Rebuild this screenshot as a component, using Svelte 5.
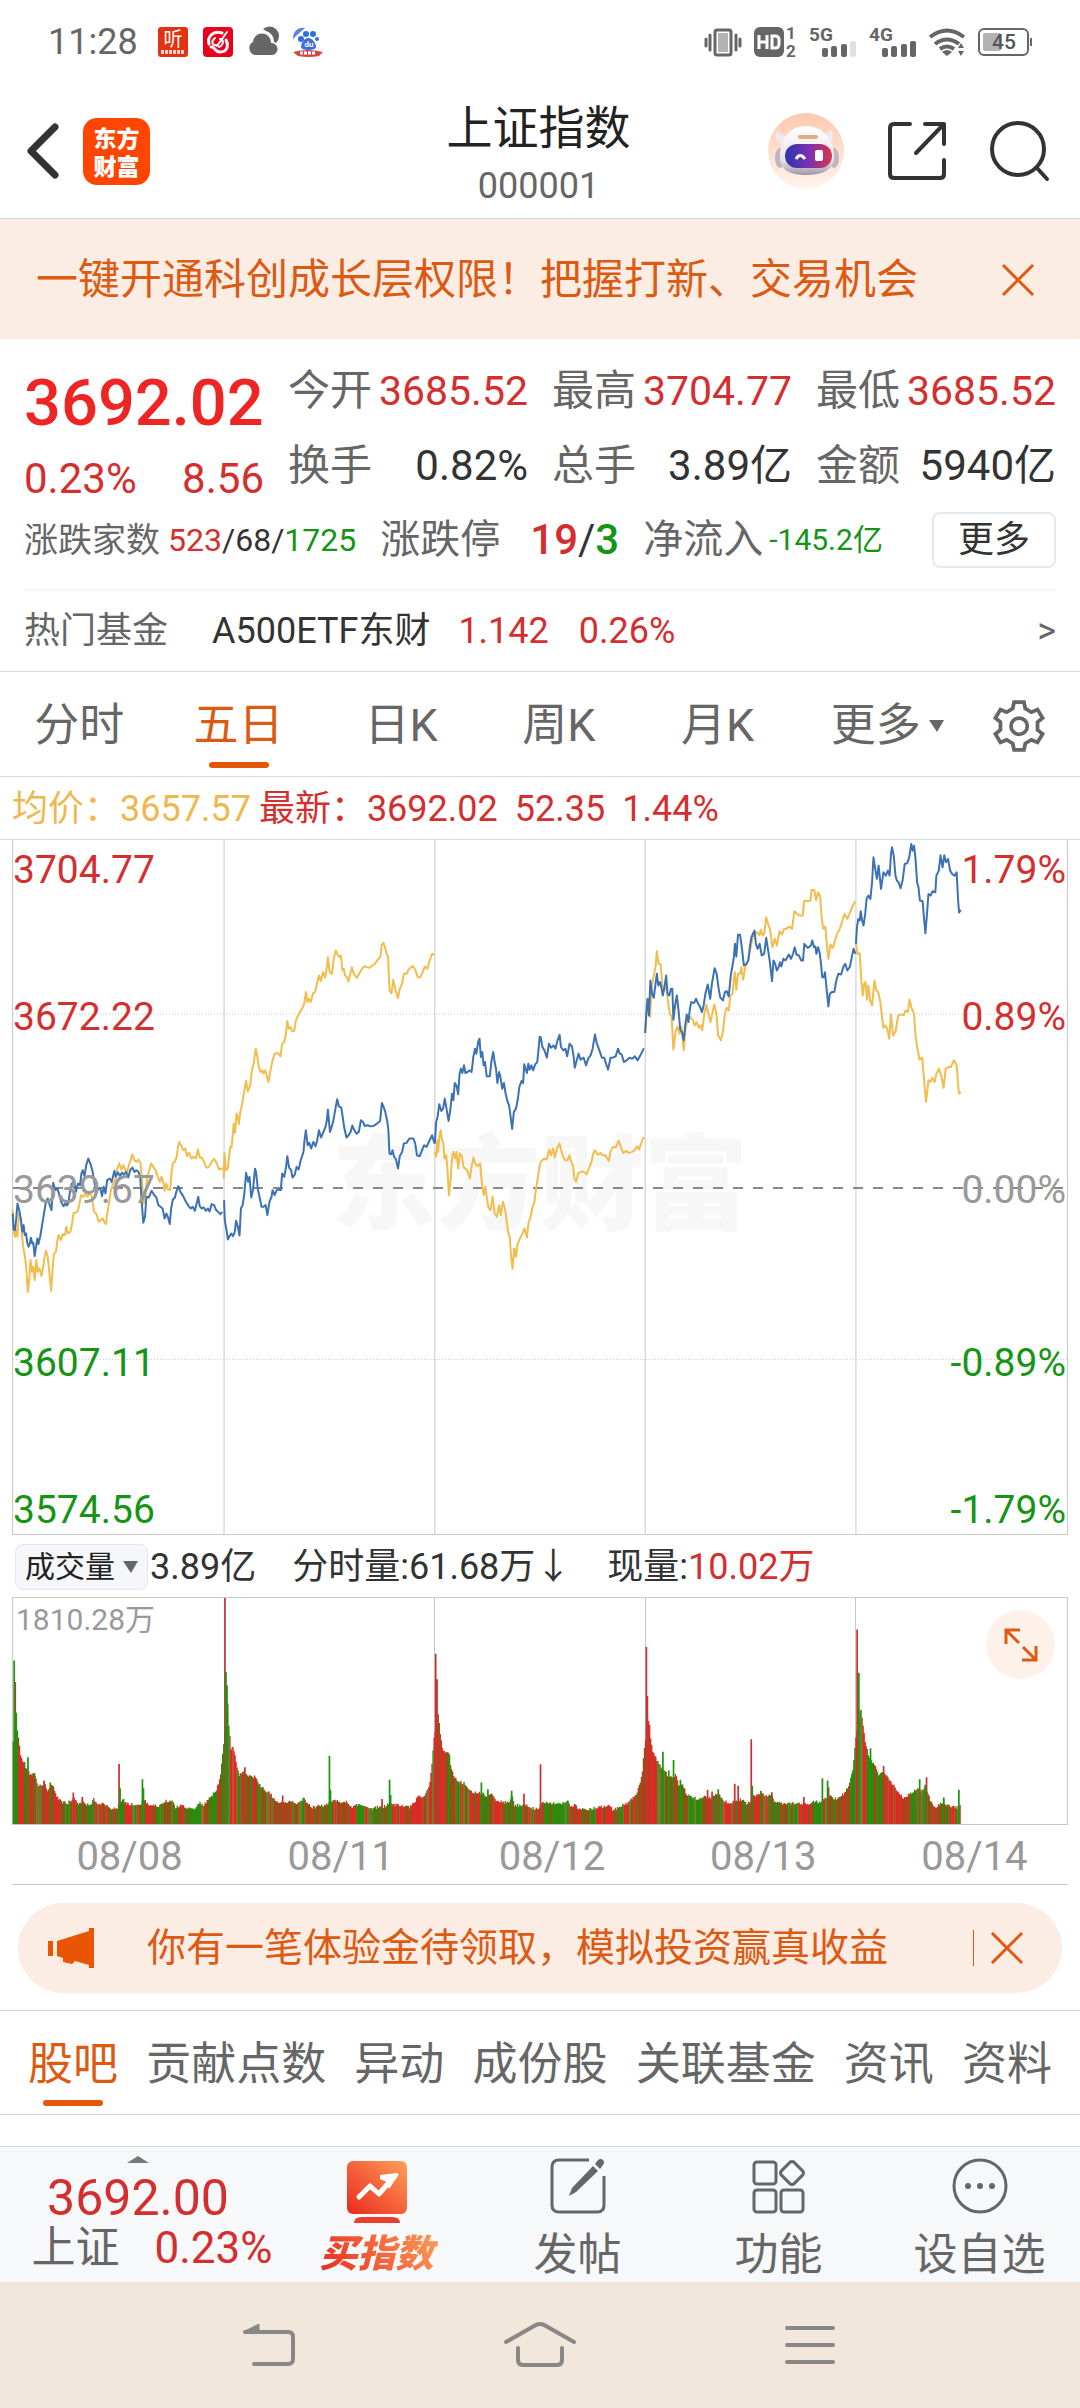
<script>
  const stats = [
    { label: '今开', value: '3685.52', tone: 'up' },
    { label: '最高', value: '3704.77', tone: 'up' },
    { label: '最低', value: '3685.52', tone: 'up' },
    { label: '换手', value: '0.82%', tone: '' },
    { label: '总手', value: '3.89亿', tone: '' },
    { label: '金额', value: '5940亿', tone: '' },
  ];
  const periods = ['分时', '五日', '日K', '周K', '月K'];
  const sections = ['股吧', '贡献点数', '异动', '成份股', '关联基金', '资讯', '资料'];
  const days = ['08/08', '08/11', '08/12', '08/13', '08/14'];
  const dividers = [649, 1262, 1874, 2487];

  let period = $state('五日');
  let section = $state('股吧');

  // Price traces, one polyline per trading day; dx/dy place each group on the plot.
  const traces = [
    { kind: 'avg', dx: 0, dy: 722, points: '34,388 37,455 41,470 44,450 48,470 52,400 55,410 58,420 62,475 66,510 70,530 74,570 78,636 82,600 86,540 90,575 94,560 98,600 103,540 107,575 112,565 118,588 123,560 127,530 131,512 136,530 140,570 146,632 150,570 154,520 160,515 164,480 168,465 174,480 180,462 186,465 190,440 195,460 202,455 207,430 211,398 218,398 224,392 228,372 233,345 240,350 246,340 252,350 257,338 263,345 267,370 271,395 278,402 284,425 290,420 296,415 300,425 305,432 310,395 315,365 320,330 326,310 332,300 337,270 344,250 350,268 356,255 362,270 367,275 372,255 377,240 382,223 388,240 394,245 400,238 406,250 410,300 415,370 420,345 425,290 430,275 437,250 443,260 450,270 456,290 462,305 467,290 472,305 476,332 481,310 486,328 492,330 496,280 500,248 506,245 511,230 515,200 519,185 524,195 530,210 536,205 541,228 547,218 554,235 560,230 567,235 573,207 578,232 584,232 591,245 597,262 603,262 608,255 614,242 620,236 627,248 634,268 640,265 648,266' },
    { kind: 'avg', dx: 0, dy: 722, points: '648,295 650,218 654,270 660,265 663,235 667,200 671,200 674,165 677,130 681,158 685,100 688,105 692,132 697,90 701,75 704,55 708,30 713,2 718,33 725,15 730,-30 735,-50 741,-95 746,-70 750,-40 755,-25 760,-30 764,-20 769,-30 774,-10 778,5 784,-30 790,-60 796,-80 806,-82 813,-72 818,-110 824,-115 829,-140 833,-178 837,-155 842,-160 848,-147 853,-148 858,-180 863,-192 870,-205 876,-215 882,-230 887,-265 891,-235 896,-245 901,-235 908,-262 914,-265 919,-290 925,-315 930,-298 937,-325 943,-308 948,-340 951,-370 956,-325 963,-320 968,-365 974,-390 979,-378 985,-370 989,-375 993,-330 997,-335 1001,-315 1006,-310 1011,-297 1016,-320 1021,-340 1026,-320 1035,-308 1042,-320 1050,-335 1058,-343 1064,-340 1072,-338 1080,-345 1088,-350 1094,-360 1104,-372 1108,-408 1113,-413 1117,-400 1122,-380 1126,-370 1129,-300 1131,-268 1136,-262 1141,-302 1148,-270 1155,-247 1160,-275 1167,-290 1172,-320 1180,-320 1187,-335 1198,-343 1205,-332 1212,-310 1220,-310 1227,-325 1233,-342 1240,-335 1247,-360 1254,-380 1261,-378' },
    { kind: 'avg', dx: 0, dy: 722, points: '1262,215 1266,230 1269,180 1272,215 1275,170 1279,150 1283,180 1287,190 1290,235 1295,225 1299,270 1303,345 1308,300 1312,235 1316,215 1321,235 1325,215 1330,265 1335,220 1341,230 1346,262 1352,265 1358,275 1364,295 1369,260 1374,232 1380,250 1386,258 1394,250 1398,300 1404,345 1409,320 1413,350 1418,382 1424,390 1430,350 1436,400 1443,410 1449,375 1454,405 1460,365 1466,385 1472,430 1476,460 1480,470 1484,530 1488,566 1493,505 1498,530 1503,490 1510,475 1517,460 1523,445 1530,472 1535,425 1541,410 1546,380 1551,370 1556,330 1562,290 1566,262 1570,245 1580,235 1588,238 1595,208 1600,225 1606,205 1611,232 1617,205 1625,190 1632,220 1640,240 1648,240 1653,225 1659,245 1664,255 1668,295 1673,305 1679,280 1686,275 1695,275 1704,282 1710,265 1718,245 1723,220 1728,210 1736,223 1744,218 1750,225 1758,225 1764,235 1768,242 1773,215 1780,200 1788,202 1797,182 1803,200 1810,218 1818,212 1826,218 1836,215 1844,210 1850,198 1856,208 1862,190 1870,170' },
    { kind: 'avg', dx: 1568, dy: -58, points: '306,638 309,590 313,540 316,580 320,590 325,500 330,470 336,440 340,392 345,430 351,432 356,495 362,510 368,500 373,550 378,580 383,590 388,688 394,635 400,618 406,640 412,620 418,690 424,620 430,595 438,590 444,598 450,615 456,605 462,622 467,615 472,630 478,580 484,553 490,580 496,605 502,575 507,552 513,580 518,645 526,660 532,635 538,580 543,562 549,570 554,525 560,520 564,475 567,455 571,508 576,460 582,460 586,440 591,478 597,440 603,430 609,400 614,375 619,350 626,340 632,335 639,345 642,328 648,345 652,340 658,290 664,312 670,330 676,380 683,355 689,375 697,332 704,342 710,325 717,325 725,318 733,325 740,272 746,278 753,285 764,285 769,240 776,242 787,240 790,208 798,208 803,238 809,215 815,228 819,290 824,325 830,318 835,380 839,415 845,372 852,382 858,360 864,340 872,325 880,300 886,280 894,295 902,275 910,255 918,242' },
    { kind: 'avg', dx: 1568, dy: -58, points: '919,370 924,400 930,398 934,470 939,525 943,490 947,485 951,538 955,495 960,540 966,555 973,480 978,510 984,515 990,545 994,580 999,622 1005,615 1010,625 1016,655 1021,582 1027,645 1034,635 1042,585 1050,582 1058,585 1063,570 1070,575 1075,537 1080,560 1088,580 1092,640 1097,680 1104,718 1112,712 1118,790 1123,845 1130,780 1136,785 1141,772 1148,785 1153,760 1161,745 1168,770 1174,803 1180,745 1188,740 1195,740 1204,720 1212,735 1216,790 1219,820 1224,815' },
    { kind: 'price', dx: 0, dy: 722, points: '34,400 37,448 41,450 44,420 48,370 52,385 55,400 59,425 62,455 66,435 69,465 73,460 76,485 80,500 84,490 87,473 91,490 94,488 98,528 102,500 106,475 109,492 114,470 118,445 122,420 126,395 130,370 136,355 142,375 147,390 152,308 158,330 164,325 170,345 176,368 182,378 187,370 192,376 196,368 200,340 206,310 213,305 218,335 224,310 230,315 234,280 238,270 243,288 248,255 254,235 260,250 266,272 271,300 277,340 283,325 289,325 294,348 299,320 304,340 309,300 316,295 322,305 330,272 334,290 340,276 346,287 352,278 358,282 364,275 370,292 376,270 382,262 388,275 394,270 400,275 405,290 409,360 414,428 419,410 423,350 430,352 438,332 446,345 452,352 458,375 464,380 470,385 476,415 481,400 486,412 491,432 495,385 500,358 506,352 510,335 516,318 522,335 530,348 538,365 546,378 552,385 558,380 564,392 568,375 574,350 578,378 584,385 590,382 596,392 602,385 607,394 613,372 620,375 626,390 632,395 638,402 644,395' },
    { kind: 'price', dx: 0, dy: 722, points: '649,360 651,420 656,450 660,478 665,468 670,460 675,468 680,455 684,422 689,440 694,466 698,385 703,375 708,340 713,278 719,305 723,290 728,352 733,330 739,266 742,275 747,325 752,350 758,380 764,380 770,375 775,405 781,365 787,350 790,330 796,345 802,330 808,328 814,330 818,280 824,290 829,262 833,228 838,262 844,270 848,292 854,285 860,260 866,268 872,240 880,215 883,180 887,150 892,195 897,188 902,205 909,185 915,198 920,180 925,150 931,172 938,155 944,140 948,120 951,88 957,155 962,140 967,120 973,85 978,57 983,78 990,82 994,110 999,145 1005,172 1011,165 1017,155 1022,136 1028,150 1034,160 1041,155 1047,120 1053,125 1058,137 1066,135 1074,138 1084,137 1094,130 1103,122 1108,68 1113,80 1118,95 1124,125 1127,150 1130,220 1135,222 1139,210 1143,228 1149,238 1155,265 1160,228 1167,215 1172,190 1180,188 1188,175 1200,175 1205,190 1210,225 1218,228 1225,210 1231,195 1238,200 1247,180 1254,165 1261,190' },
    { kind: 'price', dx: 0, dy: 722, points: '1262,190 1266,125 1270,110 1275,72 1281,92 1286,85 1291,55 1296,85 1302,122 1307,90 1312,40 1316,60 1320,8 1325,15 1330,42 1334,-20 1338,-35 1342,-22 1347,-45 1351,-22 1357,-25 1363,-30 1369,-25 1374,-70 1379,-95 1383,-80 1388,-115 1392,-125 1396,-70 1400,-85 1404,-45 1408,-55 1413,-12 1422,-12 1427,-60 1432,-85 1436,-55 1440,-35 1444,8 1449,-25 1453,-10 1458,25 1463,8 1468,40 1474,65 1478,75 1482,105 1487,146 1492,95 1498,85 1503,60 1508,20 1514,2 1519,8 1522,-48 1526,-35 1530,-22 1534,-50 1538,-32 1543,-45 1548,-30 1554,-48 1560,-55 1564,-95 1567,-130 1570,-130 1575,-100 1581,-90 1588,-68 1594,-110 1600,-98 1607,-105 1613,-95 1619,-120 1625,-137 1629,-100 1636,-90 1642,-95 1647,-72 1654,-110 1661,-102 1666,-70 1669,-38 1675,-60 1680,-80 1686,-62 1695,-68 1702,-45 1708,-65 1715,-75 1721,-95 1728,-138 1733,-112 1740,-92 1748,-68 1755,-68 1760,-50 1766,-32 1773,-68 1780,-68 1788,-72 1795,-95 1800,-80 1806,-77 1812,-55 1820,-60 1828,-68 1836,-65 1844,-72 1852,-60 1860,-75 1870,-96' },
    { kind: 'price', dx: 1568, dy: -58, points: '306,638 309,580 313,535 317,585 321,480 326,520 331,532 336,490 340,460 344,495 349,485 353,500 357,525 362,500 367,465 371,520 376,525 381,505 385,505 388,598 393,555 398,525 403,570 408,628 413,635 418,660 423,610 427,582 432,605 436,565 440,545 448,548 454,535 460,550 466,560 471,575 476,555 481,520 488,492 495,535 500,490 508,443 514,460 519,500 524,530 532,540 538,515 543,512 549,528 555,465 560,435 564,410 567,370 571,408 576,343 582,343 587,380 593,435 600,430 606,420 611,375 615,350 624,330 628,370 633,385 639,370 645,405 652,400 658,352 663,385 668,420 675,482 679,420 684,430 689,450 694,440 698,425 702,438 708,415 714,420 724,402 730,415 736,400 741,380 746,402 753,405 760,420 765,420 769,370 775,378 780,382 788,375 792,360 797,380 801,378 804,400 809,380 814,400 818,435 821,470 826,470 829,455 834,510 839,558 843,520 849,515 856,515 862,480 868,460 876,462 882,440 888,430 894,450 901,440 906,415 912,385 918,400' },
    { kind: 'price', dx: 1568, dy: -58, points: '919,370 922,320 926,295 930,300 933,272 937,300 941,315 946,280 950,235 955,225 961,235 966,185 970,110 976,150 980,175 985,135 992,205 999,155 1006,165 1012,150 1017,165 1021,100 1024,80 1029,105 1034,165 1038,180 1043,185 1049,203 1055,178 1061,130 1068,128 1074,110 1080,70 1084,90 1088,75 1092,110 1097,185 1101,200 1105,240 1113,242 1116,280 1121,338 1125,290 1130,220 1136,225 1142,212 1150,215 1153,165 1160,150 1165,104 1171,140 1176,104 1181,125 1187,115 1193,150 1199,160 1206,165 1212,155 1216,235 1219,276 1224,268' },
  ];

  // Turnover: the outline of the bars as x,top pairs, then single tall bars.
  const outline = '34,640 46,598 50,630 56,685 65,695 72,715 84,735 97,735 105,770 115,765 125,760 132,780 143,765 152,775 160,800 172,815 190,822 210,805 222,825 235,815 245,826 258,825 268,810 280,822 300,825 318,835 335,840 352,808 362,820 380,825 405,820 416,810 430,828 460,828 475,815 495,812 505,835 520,828 545,836 565,835 577,818 585,828 600,810 612,797 622,785 630,765 638,725 645,655 658,520 660,575 663,605 667,655 675,655 681,690 690,735 700,728 718,740 727,740 738,742 750,765 765,782 778,785 790,805 805,815 830,820 845,815 860,822 880,805 890,825 905,833 925,828 940,828 959,815 980,815 1000,815 1020,830 1050,825 1070,838 1095,832 1118,830 1126,820 1140,825 1165,828 1185,832 1200,820 1212,800 1225,805 1237,785 1245,760 1251,712 1258,625 1271,550 1274,588 1278,628 1283,660 1292,668 1303,675 1308,720 1318,740 1330,755 1345,760 1360,780 1375,788 1390,790 1402,790 1412,800 1425,792 1440,812 1460,818 1475,820 1485,795 1492,825 1510,828 1526,825 1545,835 1563,838 1573,812 1588,820 1620,820 1648,820 1655,835 1668,825 1675,835 1700,838 1725,835 1750,830 1770,828 1778,842 1800,830 1820,820 1835,805 1845,795 1855,765 1863,735 1871,640 1884,565 1886,602 1890,642 1896,670 1906,690 1916,710 1930,725 1940,745 1948,740 1961,735 1971,770 1980,765 1993,795 2008,805 2028,808 2048,800 2063,805 2086,790 2098,810 2118,820 2138,815 2150,810 2170,822 2179,815 2186,790 2193,800 2211,790 2223,800 2242,795 2250,820 2278,822 2303,822 2323,822 2343,825 2363,815 2380,818 2400,805 2410,795 2423,808 2438,800 2453,790 2463,770 2471,745 2477,713 2484,628 2499,530 2505,573 2510,622 2516,650 2523,680 2534,700 2542,705 2553,740 2565,725 2583,750 2593,765 2603,780 2618,800 2628,808 2640,790 2653,785 2666,775 2678,785 2688,775 2698,795 2703,820 2716,832 2728,822 2740,815 2748,828 2768,828 2780,835 2789,820 2791,858';
  const spikes = [
    [38, 390, 'down'], [41, 455, 'up'], [44, 548, 'down'], [78, 682, 'down'], [97, 730, 'down'], [125, 752, 'up'], [143, 758, 'down'], [210, 788, 'up'], [236, 802, 'up'],
    [343, 702, 'up'], [346, 775, 'down'], [411, 748, 'down'], [414, 775, 'down'], [651, 202, 'up'], [654, 425, 'down'], [657, 465, 'down'], [709, 712, 'up'], [727, 738, 'down'], [738, 742, 'up'],
    [819, 797, 'up'], [955, 677, 'down'], [958, 780, 'down'], [1108, 808, 'up'], [1130, 750, 'down'], [1133, 795, 'down'], [1264, 370, 'up'], [1268, 447, 'up'], [1303, 675, 'down'],
    [1397, 758, 'down'], [1416, 778, 'down'], [1485, 783, 'down'], [1521, 792, 'up'], [1569, 703, 'up'], [1648, 812, 'down'], [1877, 350, 'up'], [1880, 497, 'up'], [1925, 665, 'down'],
    [1942, 722, 'down'], [1956, 690, 'down'], [1976, 750, 'down'], [2055, 780, 'up'], [2068, 785, 'up'], [2086, 778, 'down'], [2134, 762, 'up'], [2144, 768, 'up'], [2182, 628, 'up'], [2185, 768, 'down'],
    [2210, 783, 'down'], [2242, 787, 'up'], [2335, 802, 'up'], [2389, 745, 'down'], [2404, 752, 'down'], [2407, 772, 'up'], [2490, 297, 'up'], [2495, 427, 'down'], [2529, 655, 'down'], [2567, 708, 'up'],
    [2672, 748, 'down'], [2688, 765, 'down'], [2692, 742, 'up'], [2742, 803, 'down'], [2786, 780, 'down'],
  ];

  function buildBars() {
    const pts = outline.split(' ').map((p) => p.split(',').map(Number));
    const out = { up: '', down: '', mixed: '' };
    let seed = 17;
    const rand = () => (seed = (seed * 16807) % 2147483647) / 2147483647;
    let i = 0;
    let kind = 'down';
    for (let x = 34; x <= 2790; x += 3) {
      while (i < pts.length - 2 && pts[i + 1][0] < x) i++;
      const [x0, y0] = pts[i];
      const [x1, y1] = pts[i + 1];
      const t = Math.min(1, Math.max(0, (x - x0) / (x1 - x0)));
      const y = Math.round(y0 + (y1 - y0) * t + (rand() - 0.5) * 10);
      if (rand() > 0.45) {
        const r = rand();
        kind = r < 0.34 ? 'up' : r < 0.64 ? 'down' : 'mixed';
      }
      out[kind] += `M${x} ${y}h4V883h-4z`;
    }
    return out;
  }
  const bars = buildBars();
  const tall = (kind) => spikes.filter((s) => s[2] === kind).map(([x, y]) => `M${x - 2} ${y}h5V883h-5z`).join('');
</script>

<div class="app">
  <div class="status">
    <span class="clock">11:28</span>
    <div class="apps">
      <svg width="30" height="30" viewBox="0 0 30 30"><rect width="30" height="30" rx="3" fill="#e23312" /><text class="tiny" x="15" y="19" font-size="19" text-anchor="middle" fill="#fff">听</text><path d="M3 25h24" stroke="#fbd3c8" stroke-width="4" stroke-dasharray="3 1" /></svg>
      <svg width="30" height="30" viewBox="0 0 30 30"><rect width="30" height="30" rx="4" fill="#e9001c" /><g fill="none" stroke="#fff" stroke-linecap="round"><path d="M19 6C10 3 4 10 6 17M8 20c3-2 3 5 9 5 7 0 9-6 6-12" stroke-width="3" /><path d="M24 5 14 19M12 11c-5 4-2 8 2 7M17 12c4 0 4 6-1 8" stroke-width="2" /></g></svg>
      <svg width="30" height="30" viewBox="0 0 30 30"><path d="M7 28a7 7 0 0 1-2-13 9 9 0 0 1 18 1 6 6 0 0 1 1 12Z" fill="#666" /><path d="M15 2a9 9 0 0 1 13 14l-2-1a11 11 0 0 0-8-11Z" fill="#666" /></svg>
      <svg width="30" height="30" viewBox="0 0 30 30"><path d="M0 12C0 4 5 0 12 1L3 9Z" fill="#5b86e0" /><g fill="#2c6fe0"><circle cx="13" cy="7" r="3" /><circle cx="20" cy="7" r="3" /><circle cx="8" cy="12" r="3" /><circle cx="24" cy="12" r="2" /></g><path d="M15 11c5 0 8 6 8 9 0 4-15 4-15 0 0-3 3-9 7-9Z" fill="#3d6be0" /><text class="tiny" x="16" y="20" font-size="8" font-weight="700" text-anchor="middle" fill="#fff">du</text><path d="M0 25q14-4 30 0l-4 4q-10 2-21 0Z" fill="#d8453f" /><path d="M7 26h16" stroke="#fff" stroke-width="3" stroke-dasharray="3 1" /></svg>
    </div>
    <div class="signals">
      <svg width="38" height="30" viewBox="0 0 38 30"><rect x="11" y="3" width="16" height="25" rx="2" fill="#fff" stroke="#666" stroke-width="3" /><rect x="14" y="6" width="10" height="19" fill="#b3b3b3" /><path d="M6 8v15M32 8v15M2 12v7M36 12v7" stroke="#666" stroke-width="3" stroke-linecap="round" /></svg>
      <svg width="43" height="30" viewBox="0 0 43 30"><rect width="30" height="30" rx="6" fill="#666" /><path d="M5 8v14M13 8v14M5 15h8M18 9h3q4 0 4 4v4q0 4-4 4h-3Z" fill="none" stroke="#fff" stroke-width="3" /><g class="tiny" font-size="17" font-weight="700" fill="#666"><text x="32" y="12">1</text><text x="32" y="30">2</text></g></svg>
      {#each ['5G', '4G'] as net}
        <svg width="48" height="30" viewBox="0 0 48 30"><text class="tiny" x="0" y="14" font-size="19" font-weight="700" fill="#666">{net}</text><g fill="#666"><rect x="13" y="21" width="6" height="9" rx="2" /><rect x="22" y="19" width="6" height="11" rx="2" /><rect x="32" y="17" width="6" height="13" rx="2" /><rect x="41" y="14" width="6" height="16" rx="2" opacity={net === '5G' ? 0.2 : 1} /></g></svg>
      {/each}
      <svg width="37" height="30" viewBox="0 0 37 30"><g fill="none" stroke="#666" stroke-width="4"><path d="M1 10Q18-3 35 10" /><path d="M6 17q12-9 24 0" /><path d="M11 22q7-5 14 0" /></g><path d="m13 25 5 4 5-4q-5-4-10 0ZM29 21l3-5 3 5ZM29 24h6l-3 5Z" fill="#666" /></svg>
      <svg width="54" height="28" viewBox="0 0 54 28"><rect x="1" y="1" width="49" height="26" rx="5" fill="#fff" stroke="#666" stroke-width="2" /><rect x="5" y="5" width="18" height="18" rx="2" fill="#b3b3b3" /><path d="M53 10v8" stroke="#666" stroke-width="2" /><text class="tiny" x="26" y="21" font-size="21" font-weight="500" text-anchor="middle" fill="#555">45</text></svg>
    </div>
  </div>

  <header>
    <div class="side">
      <button aria-label="返回"><svg width="32" height="56" viewBox="0 0 32 56"><path d="M28 4 4 28l24 24" fill="none" stroke="#333" stroke-width="7" stroke-linecap="round" stroke-linejoin="round" /></svg></button>
      <a class="logo" href="#home"><span>东方</span><span>财富</span></a>
    </div>
    <div class="title"><h1>上证指数</h1><p>000001</p></div>
    <div class="side end">
      <button aria-label="智能助手">
        <svg width="76" height="76" viewBox="0 0 76 76">
          <defs>
            <linearGradient id="halo" x1="0" y1="0" x2="0" y2="1"><stop offset="0" stop-color="#fdc9ae" /><stop offset="1" stop-color="#fff4ee" /></linearGradient>
            <linearGradient id="visor"><stop offset="0" stop-color="#2b35ad" /><stop offset=".5" stop-color="#7a2fb4" /><stop offset="1" stop-color="#d8364f" /></linearGradient>
            <linearGradient id="shell" x1="0" y1="0" x2="0" y2="1"><stop offset="0" stop-color="#fff" /><stop offset=".7" stop-color="#e8e3ea" /><stop offset="1" stop-color="#9f98a6" /></linearGradient>
          </defs>
          <circle cx="38" cy="38" r="38" fill="url(#halo)" />
          <ellipse cx="12" cy="45" rx="5" ry="10" fill="#bcb6c1" /><ellipse cx="66" cy="45" rx="5" ry="10" fill="#bcb6c1" />
          <path d="M15 31Q5 28 9 18q4 5 12 6ZM59 31q9-4 4-15-4 6-10 7Z" fill="#efeaee" />
          <path d="M12 44c0-20 11-31 26-31s28 11 28 31c0 13-12 18-28 18S12 57 12 44Z" fill="url(#shell)" />
          <rect x="30" y="22" width="20" height="4" rx="2" fill="#dfac7e" />
          <rect x="17" y="31" width="47" height="24" rx="12" fill="url(#visor)" />
          <path d="M28 46q4-7 9 0" fill="none" stroke="#fff" stroke-width="3" /><rect x="47" y="37" width="8" height="11" rx="2" fill="#fff" />
        </svg>
      </button>
      <button aria-label="分享"><svg width="58" height="58" viewBox="0 0 58 58"><g fill="none" stroke="#333" stroke-width="4" stroke-linecap="round" stroke-linejoin="round"><path d="M22 2H6Q2 2 2 6v46q0 4 4 4h46q4 0 4-4V38" /><path d="M37 2h19v20M55 3 28 31" /></g></svg></button>
      <button aria-label="搜索"><svg width="60" height="60" viewBox="0 0 60 60"><g fill="none" stroke="#333" stroke-width="4" stroke-linecap="round"><circle cx="28" cy="28" r="26" /><path d="m47 47 10 11" /></g></svg></button>
    </div>
  </header>

  <div class="banner">
    <a href="#permission">一键开通科创成长层权限！把握打新、交易机会</a>
    <button aria-label="关闭"><svg width="32" height="32" viewBox="0 0 32 32"><path d="m1 1 30 30M31 1 1 31" stroke="#e2570f" stroke-width="3" /></svg></button>
  </div>

  <section class="quote">
    <div class="summary">
      <div class="last">
        <strong>3692.02</strong>
        <div class="change"><span>0.23%</span><span>8.56</span></div>
      </div>
      <dl class="stats">
        {#each stats as s}
          <div><dt>{s.label}</dt><dd class={s.tone}>{s.value}</dd></div>
        {/each}
      </dl>
    </div>
    <div class="breadth">
      <span class="b-label small">涨跌家数</span>
      <span class="counts"><span class="up">523</span>/68/<span class="down">1725</span></span>
      <span class="b-label">涨跌停</span>
      <span class="limits"><b class="up">19</b>/<b class="down">3</b></span>
      <span class="b-label">净流入</span>
      <span class="flow down">-145.2亿</span>
      <button class="more">更多</button>
    </div>
    <a class="fund" href="#fund">
      <span class="muted">热门基金</span><span class="name">A500ETF东财</span><span class="up">1.142</span><span class="up">0.26%</span><span class="go">&gt;</span>
    </a>
  </section>

  <nav class="periods">
    {#each periods as p}
      <button class:active={p === period} onclick={() => (period = p)}>{p}</button>
    {/each}
    <button>更多<svg width="15" height="12" viewBox="0 0 15 12"><path d="M0 0h15L8 12Z" fill="#666" /></svg></button>
    <button aria-label="设置"><svg width="52" height="52" viewBox="0 0 153 153"><g fill="none" stroke="#666" stroke-width="11"><path d="M62 6H91L95 25 113 36 131 28 146 53 131 65V88L146 100 131 125 113 117 95 128 91 147H62L58 128 40 117 22 125 7 100 22 88V65L7 53 22 28 40 36 58 25Z" /><circle cx="77" cy="77" r="24" /></g></svg></button>
  </nav>

  <div class="legend"><span class="avg-text">均价：3657.57</span><span class="up">最新：3692.02</span><span class="up">52.35</span><span class="up">1.44%</span></div>

  <div class="plot price-plot">
    <span class="watermark">东方财富</span>
    <svg class="canvas" viewBox="35 0 3066 2085" preserveAspectRatio="none" aria-label="五日走势">
      <g class="grid">
        {#each dividers as x}<path d="M{x} 0V2085" />{/each}
        <path class="dotted" d="M35 523H3101M35 1561H3101" />
        <path class="dashed" d="M35 1046H3101" />
      </g>
      {#each traces as t}
        <polyline class={t.kind} points={t.points} transform="translate({t.dx} {t.dy})" />
      {/each}
    </svg>
    <div class="axis">
      <span class="up">3704.77</span><span class="up">3672.22</span><span class="flat">3639.67</span><span class="down">3607.11</span><span class="down">3574.56</span>
    </div>
    <div class="axis right">
      <span class="up">1.79%</span><span class="up">0.89%</span><span class="flat">0.00%</span><span class="down">-0.89%</span><span class="down">-1.79%</span>
    </div>
  </div>

  <div class="volume-head">
    <label class="picker">
      <select aria-label="指标"><option>成交量</option></select>
      <svg width="15" height="12" viewBox="0 0 15 12"><path d="M0 0h15L8 12Z" fill="#666" /></svg>
    </label>
    <span class="vol">3.89亿</span><span>分时量:61.68万↓</span><span>现量:<span class="up">10.02万</span></span>
  </div>

  <div class="plot volume-plot">
    <svg class="canvas" viewBox="35 202 3066 681" preserveAspectRatio="none" aria-label="成交量">
      <g class="grid">{#each dividers as x}<path d="M{x} 202V883" />{/each}</g>
      <path d={bars.mixed} fill="#8c5313" /><path d={bars.up} fill="#dc2b24" /><path d={bars.down} fill="#2c8a0d" />
      <path d={tall('up')} fill="#c8332f" /><path d={tall('down')} fill="#1b960f" />
    </svg>
    <span class="vol-max">1810.28万</span>
    <button class="expand" aria-label="全屏"><svg width="34" height="34" viewBox="0 0 34 34"><path d="M2 16V2h14M3 3l12 12M32 18v14H18M31 31 19 19" fill="none" stroke="#dc5a12" stroke-width="3" /></svg></button>
  </div>
  <div class="dates">{#each days as d}<span>{d}</span>{/each}</div>

  <div class="promo">
    <svg width="46" height="40" viewBox="0 0 46 40"><path d="M0 13h5v15H0ZM9 13 41 3V0h5v40h-5v-3l-14-4-3 3-9-2v-4l-6-2Z" fill="#ea5504" /></svg>
    <a href="#trial">你有一笔体验金待领取，模拟投资赢真收益</a>
    <span class="bar"></span>
    <button aria-label="关闭"><svg width="32" height="32" viewBox="0 0 32 32"><path d="m1 1 30 30M31 1 1 31" stroke="#e2570f" stroke-width="3" /></svg></button>
  </div>

  <nav class="sections">
    {#each sections as s}
      <button class:active={s === section} onclick={() => (section = s)}>{s}</button>
    {/each}
  </nav>

  <div class="toolbar">
    <button class="index">
      <svg width="22" height="7" viewBox="0 0 22 7"><path d="M0 7 11 0l11 7Z" fill="#77787a" /></svg>
      <span class="idx-value">3692.00</span>
      <span class="idx-row"><span>上证</span><span class="up">0.23%</span></span>
    </button>
    <button class="buy">
      <svg width="60" height="62" viewBox="0 0 60 62">
        <defs><linearGradient id="buy" x1="0" y1="1" x2="1" y2="0"><stop offset="0" stop-color="#ea2a20" /><stop offset=".5" stop-color="#f4623a" /><stop offset="1" stop-color="#fda159" /></linearGradient></defs>
        <rect width="60" height="53" rx="6" fill="url(#buy)" /><path d="M7 62q0-6 8-6h30q8 0 8 6Z" fill="#e8402c" />
        <path d="m12 36 11-11 9 8 12-14" fill="none" stroke="#fff" stroke-width="5" stroke-linecap="round" stroke-linejoin="round" /><path d="m33 14 17-2q2 0 1 3l-9 13-2-7-7-3Z" fill="#fff" />
      </svg>
      <span>买指数</span>
    </button>
    <button>
      <svg width="56" height="56" viewBox="0 0 56 56"><path d="M39 2H9Q2 2 2 9v38q0 7 7 7h38q7 0 7-7V18" fill="none" stroke="#666" stroke-width="3" /><path d="m19 38 3-8L43 8l5 5-22 21ZM45 6l3-4q3-2 5 0t0 5l-3 4Z" fill="#666" /></svg>
      <span>发帖</span>
    </button>
    <button>
      <svg width="54" height="56" viewBox="0 0 54 56"><g fill="none" stroke="#666" stroke-width="3"><rect x="2" y="4" width="22" height="22" rx="3" /><rect x="2" y="32" width="22" height="22" rx="3" /><rect x="29" y="32" width="22" height="22" rx="3" /><rect x="31" y="6" width="18" height="18" rx="3" transform="rotate(45 40 15)" /></g></svg>
      <span>功能</span>
    </button>
    <button>
      <svg width="56" height="56" viewBox="0 0 56 56"><circle cx="28" cy="28" r="26" fill="none" stroke="#666" stroke-width="3" /><g fill="#666"><circle cx="16" cy="28" r="3" /><circle cx="28" cy="28" r="3" /><circle cx="40" cy="28" r="3" /></g></svg>
      <span>设自选</span>
    </button>
  </div>

  <div class="system">
    <button aria-label="返回"><svg width="52" height="44" viewBox="0 0 52 44"><path d="M1 9h43q5 0 5 5v22q0 5-5 5H10" fill="none" stroke="#8a8886" stroke-width="4" stroke-linecap="round" /><path d="M1 8 15 1v8Z" fill="#8a8886" stroke="#8a8886" /></svg></button>
    <button aria-label="主页"><svg width="72" height="46" viewBox="0 0 72 46"><g fill="none" stroke="#8a8886" stroke-width="4" stroke-linecap="round"><path d="M2 20 30 4q6-4 12 0l28 16" /><path d="M14 26v12q0 5 5 5h34q5 0 5-5V26" /></g></svg></button>
    <button aria-label="任务"><svg width="50" height="40" viewBox="0 0 50 40"><path d="M2 3h46M2 20h46M2 37h46" stroke="#8a8886" stroke-width="4" stroke-linecap="round" /></svg></button>
  </div>
</div>

<style>
  :global(body) { margin: 0; background: #fff; }
  .app { display: flex; flex-direction: column; font-family: Roboto, "Noto Sans CJK SC", sans-serif; color: #333; background: #fff; line-height: 1; }
  svg { display: block; flex: none; overflow: visible; }
  button { border: 0; padding: 0; background: none; font: inherit; color: inherit; cursor: pointer; }
  a { color: inherit; text-decoration: none; }
  .up { color: #d42f2f; }
  .down { color: #159415; }
  .flat { color: #999; }
  .tiny { font-family: Roboto, "Noto Sans CJK SC", sans-serif; }

  .status { display: flex; align-items: center; height: 84px; padding: 0 48px; box-sizing: border-box; color: #666; }
  .clock { margin-right: 20px; font-size: 36px; }
  .apps { display: flex; align-items: center; gap: 15px; }
  .signals { display: flex; align-items: center; gap: 12px; margin-left: auto; }

  header { display: grid; grid-template-columns: 1fr auto 1fr; height: 134px; padding: 0 30px 0 27px; border-bottom: 1px solid #d5d5d8; }
  .side { display: flex; align-items: center; gap: 24px; }
  .end { justify-content: flex-end; gap: 44px; }
  .logo { display: flex; flex-direction: column; align-items: center; justify-content: center; width: 67px; height: 67px; border-radius: 14px; background: #ff4500; color: #fff; font: 900 23px/28px "Noto Sans CJK SC", sans-serif; }
  .title { padding-top: 16px; text-align: center; }
  h1 { margin: 0; font-size: 46px; line-height: 56px; font-weight: 400; color: #222; }
  .title p { margin: 0; font-size: 36px; line-height: 60px; color: #666; }

  .banner { display: flex; align-items: center; justify-content: space-between; height: 118px; padding: 2px 46px 0 36px; background: #fcede4; color: #dc5a12; font-size: 42px; }

  .quote { padding: 15px 24px 0; border-bottom: 1px solid #d9d9d9; }
  .summary { display: grid; grid-template-columns: 240fr 768fr; gap: 24px; }
  .last { padding-top: 7px; color: #d42f2f; }
  .last strong { display: block; font-size: 65px; line-height: 84px; font-weight: 500; color: #ee2525; }
  .change { display: flex; justify-content: space-between; font-size: 42px; line-height: 68px; }
  .stats { display: grid; grid-template-columns: repeat(3, 1fr); align-content: start; column-gap: 24px; margin: 0; font-size: 42px; line-height: 74px; }
  .stats div { display: flex; justify-content: space-between; white-space: nowrap; height: 75px; }
  dt { color: #666; }
  dd { margin: 0; }
  dd.up { font-size: 41px; }
  .breadth { display: flex; align-items: center; height: 54px; white-space: nowrap; }
  .b-label { font-size: 40px; color: #666; }
  .small { font-size: 34px; }
  .counts { margin: 0 24px 0 8px; font-size: 32px; }
  .limits { margin: 0 24px 0 30px; font-size: 42px; }
  .limits b { font-weight: 500; }
  .flow { margin-left: 6px; font-size: 30px; }
  .more { margin-left: auto; width: 124px; height: 56px; border: 2px solid #e6e9ec; border-radius: 8px; font-size: 36px; line-height: 48px; }
  .fund { display: flex; align-items: center; height: 80px; margin-top: 22px; border-top: 2px solid #f5f5f7; font-size: 36px; }
  .fund .name { margin: 0 28px 0 44px; }
  .fund .up + .up { margin-left: 30px; }
  .muted { color: #666; }
  .go { margin-left: auto; color: #666; }

  .periods { display: grid; grid-template-columns: 159fr 160fr 166fr 150fr 168fr 172fr 92fr; height: 104px; padding-right: 15px; border-bottom: 1px solid #d9d9d9; font-size: 45px; color: #666; }
  .periods button, .sections button { position: relative; display: flex; align-items: center; justify-content: center; gap: 8px; padding-top: 3px; white-space: nowrap; }
  .active { color: #dc5a12; }
  .active::after { content: ""; position: absolute; left: 50%; bottom: 8px; width: 60px; height: 6px; margin-left: -30px; border-radius: 3px; background: #e55708; }

  .legend { display: flex; gap: 17px; height: 62px; padding-left: 12px; border-bottom: 1px solid #d9d9d9; font-size: 36px; line-height: 64px; white-space: nowrap; }
  .legend .avg-text { margin-right: -9px; color: #efb84e; }

  .plot { position: relative; margin: 0 12px; border: solid #c9c9c9; border-width: 0 1px 1px; }
  .canvas { position: relative; width: 100%; height: 100%; }
  .grid path { fill: none; stroke: #c9c9c9; stroke-width: 1px; vector-effect: non-scaling-stroke; shape-rendering: crispEdges; }
  .grid .dotted { stroke-dasharray: 1 2; }
  .grid .dashed { stroke: #888; stroke-width: 2px; stroke-dasharray: 10 10; }
  .price-plot { height: 694px; }
  polyline { fill: none; stroke-width: 2px; stroke-linejoin: round; vector-effect: non-scaling-stroke; }
  .price { stroke: #3c72b4; }
  .avg { stroke: #f2bd4c; }
  .watermark { position: absolute; top: 50%; left: 50%; transform: translate(-50%, -50%); font-size: 104px; font-weight: 900; color: #f7f7f7; white-space: nowrap; }
  .axis { position: absolute; inset: 0 auto 0 0; display: flex; flex-direction: column; justify-content: space-between; padding: 10px 0 4px; box-sizing: border-box; font-size: 39px; line-height: 40px; }
  .axis span:nth-child(2) { margin-bottom: 26px; }
  .axis span:nth-child(4) { margin-top: 26px; }
  .right { inset: 0 1px 0 auto; text-align: right; }

  .volume-head { display: flex; align-items: center; gap: 36px; height: 60px; padding: 2px 0 0 15px; font-size: 36px; white-space: nowrap; }
  .picker { position: relative; display: flex; align-items: center; height: 44px; border: 1px solid #e3e6ea; border-radius: 8px; background: #f6f7fa; }
  .picker select { appearance: none; width: 131px; height: 44px; padding: 0 0 0 9px; border: 0; background: none; font: inherit; font-size: 30px; color: #222; }
  .picker svg { position: absolute; right: 9px; pointer-events: none; }
  .vol { margin-left: -34px; }

  .volume-plot { height: 226px; border-top-width: 1px; }
  .vol-max { position: absolute; left: 3px; top: 6px; font-size: 30px; line-height: 32px; color: #999; }
  .expand { position: absolute; right: 12px; top: 12px; display: flex; align-items: center; justify-content: center; width: 69px; height: 69px; border-radius: 50%; background: #fef1ea; }
  .dates { display: grid; grid-template-columns: repeat(5, 1fr); height: 59px; margin: 0 12px; border-bottom: 1px solid #c9c9c9; font-size: 40px; line-height: 64px; color: #999; text-align: center; }
  .dates span { padding-left: 24px; }

  .promo { display: flex; align-items: center; height: 90px; margin: 18px 18px 17px; padding: 0 39px 0 30px; border-radius: 45px; background: #fcede4; color: #dc5a12; font-size: 39px; }
  .promo a { flex: 1; margin-left: 53px; white-space: nowrap; }
  .promo .bar { width: 1px; height: 36px; margin-right: 17px; background: #dc5a12; }

  .sections { display: flex; justify-content: space-between; height: 103px; padding: 0 28px; border: solid #d5d5d8; border-width: 1px 0; font-size: 45px; color: #666; }

  .toolbar { display: grid; grid-template-columns: 276fr 201fr 201fr 201fr 201fr; height: 135px; margin-top: 31px; border-top: 1px solid #d5d5d8; background: #f7f8fa; font-size: 44px; color: #666; }
  .toolbar button { display: flex; flex-direction: column; align-items: center; padding-top: 11px; white-space: nowrap; }
  .toolbar button > span { line-height: 82px; }
  .toolbar .index { padding-top: 9px; }
  .toolbar .idx-value { margin-top: 7px; font-size: 50px; line-height: 56px; color: #d42f2f; }
  .toolbar .idx-row { display: flex; gap: 35px; padding-left: 28px; line-height: 45px; }
  .toolbar .buy { padding-top: 14px; }
  .toolbar .buy span { padding: 0 4px; font-size: 38px; line-height: 62px; font-weight: 900; font-style: italic; color: transparent; background: linear-gradient(60deg, #e3221c, #f4623a 50%, #fda159); background-clip: text; }

  .system { display: grid; grid-template-columns: repeat(3, 1fr); height: 126px; padding: 0 135px; background: #f1e7da; }
  .system button { display: flex; align-items: center; justify-content: center; }
</style>
